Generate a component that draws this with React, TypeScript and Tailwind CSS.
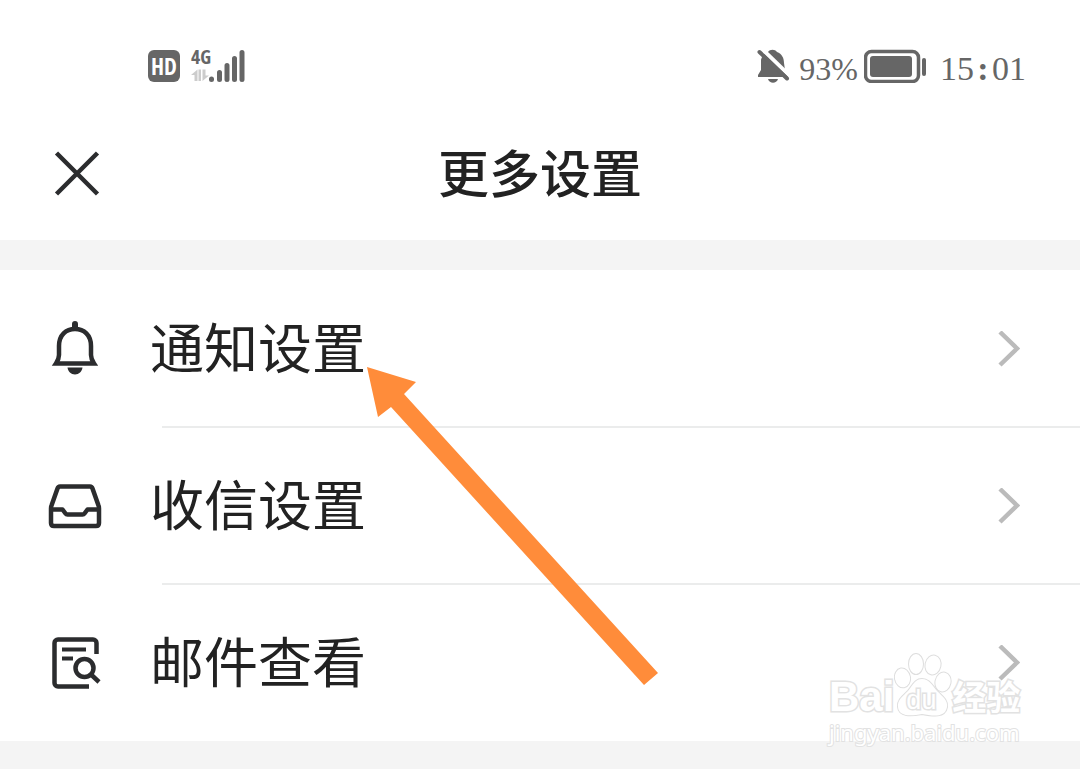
import type { ReactNode } from "react";

function StatusBar() {
  return (
    <div className="flex h-[108px] items-center justify-between pl-[148px] pr-[54px] pt-6 text-[#666]">
      <div className="flex items-center gap-[11px]">
        <div className="flex size-8 items-center justify-center rounded-md bg-[#666] font-['Liberation_Sans_Narrow','Open_Sans_Condensed',sans-serif] text-[23px] font-bold leading-7 text-white">
          HD
        </div>
        <div className="relative">
          <span className="absolute left-0 top-0 font-['Liberation_Sans_Narrow','Open_Sans_Condensed',sans-serif] text-xl font-bold leading-4">
            4G
          </span>
          <svg width="54" height="34" viewBox="0 0 54 34" aria-hidden="true">
            <path d="M6.500 20.500v11.500H3.500v-6H0zM7.500 20.500h2.500v11.500H7.500zM11.500 20.500h3v6H18L11.500 32z" fill="#ccc" />
            <g stroke="#666" strokeWidth="5" strokeLinecap="round">
              <path d="M20.500 30v.5M28.500 23.500v7M36 16.500v14M43.500 9.500v21M51 3.500v27" />
            </g>
          </svg>
        </div>
      </div>
      <div className="flex items-center font-['Liberation_Serif',serif] text-[32px] leading-8">
        <svg width="34" height="36" viewBox="0 0 34 36" aria-hidden="true">
          <path d="M11 4C13 1 18 1 20 4C25 6 27 10 27 15l1 7l3 7H1v-2l3-5V12c1-4 3-6 7-8z" fill="#666" />
          <path d="M11 31h10c-1.500 5-8.500 5-10 0z" fill="#666" />
          <path d="M3 -1L36 31" stroke="white" strokeWidth="4" />
          <path d="M2.500 4L30 30.500" stroke="#666" strokeWidth="4" strokeLinecap="round" />
        </svg>
        <span className="ml-2 pt-1.5">93%</span>
        <svg className="ml-1.5" width="64" height="34" viewBox="0 0 64 34" aria-hidden="true">
          <rect x="1.500" y="2.500" width="53" height="30" rx="6" fill="none" stroke="#666" strokeWidth="3.500" />
          <rect x="6" y="7" width="42" height="21" rx="3" fill="#666" />
          <rect x="58" y="9" width="4" height="18" rx="2" fill="#666" />
        </svg>
        <time className="ml-3 flex pt-1.5 text-[34px]">
          15<span className="w-[18px] text-center font-bold">:</span>01
        </time>
      </div>
    </div>
  );
}

function BellIcon() {
  return (
    <svg width="54" height="58" viewBox="0 0 54 58" fill="none" aria-hidden="true">
      <path d="M11 26C11 15 18 9 27 9s16 6 16 17v9c0 3 1 5.500 3 8.500H8c2-3 3-5.500 3-8.500z" stroke="#2b2c2e" strokeWidth="4.500" />
      <path d="M24 8V4a3 3 0 0 1 6 0v4zM19.500 47.500h15c-.5 4-3.500 7-7.500 7s-7-3-7.500-7z" fill="#2b2c2e" />
    </svg>
  );
}

function InboxIcon() {
  return (
    <svg width="54" height="46" viewBox="0 0 54 46" fill="none" stroke="#2b2c2e" strokeWidth="4.500" strokeLinejoin="round" aria-hidden="true">
      <path d="M12 3.500h30c1.500 0 2 .5 2.500 2l6 17c.5 1 .5 2 .5 3V40c0 2-1 3-3 3H6c-2 0-3-1-3-3V25.500c0-1 0-2 .5-3l6-17c.5-1.500 1-2 2.500-2z" />
      <path d="M3 26.500h11.500l3 4c.5.700 1 1 2 1h15c1 0 1.500-.3 2-1l3-4H51" />
    </svg>
  );
}

function MailSearchIcon() {
  return (
    <svg width="54" height="54" viewBox="0 0 54 54" fill="none" stroke="#2b2c2e" strokeWidth="4.500" aria-hidden="true">
      <path d="M48.500 18V7c0-2-1.500-3.500-3.500-3.500H10C8 3.500 6.500 5 6.500 7v40c0 2 1.500 3.500 3.500 3.500h31" />
      <path d="M14 13.500h24M14 22.500h11" strokeWidth="4" />
      <circle cx="36.500" cy="32" r="9" />
      <path d="M42.500 38l8.500 8" />
    </svg>
  );
}

function SettingRow({ icon, label, divider }: { icon: ReactNode; label: string; divider?: boolean }) {
  return (
    <li>
      <a href="#" className="relative flex h-[157px] items-center pl-12 pr-[60px]">
        <span className="flex w-[54px] justify-center">{icon}</span>
        <span className="ml-12 flex-1 pb-1.5 text-[54px] leading-[60px]">{label}</span>
        <svg width="22" height="36" viewBox="0 0 22 36" fill="none" aria-hidden="true">
          <path d="M2 1L19 17.500L2 34" stroke="#bbb" strokeWidth="4.500" />
        </svg>
        {divider && <span className="absolute -bottom-px left-[162px] right-0 h-0.5 bg-[#ebecec]" />}
      </a>
    </li>
  );
}

function Watermark() {
  return (
    <div className="absolute left-[829px] top-[652px] font-['Liberation_Sans','Noto_Sans_CJK_SC',sans-serif] text-white [-webkit-text-stroke:3px_#e2e2e2] [paint-order:stroke_fill]">
      <div className="flex h-[66px] items-end">
        <span className="text-[42px] font-bold leading-[42px]">Bai</span>
        <div className="relative h-[66px] w-[58px]">
          <svg width="58" height="66" viewBox="0 0 58 66" fill="white" stroke="#dedede" strokeWidth="2" aria-hidden="true">
            <ellipse cx="8.500" cy="26" rx="7.500" ry="9.500" transform="rotate(-10 8 26)" />
            <ellipse cx="22" cy="12" rx="7" ry="10" />
            <ellipse cx="39" cy="13" rx="7.500" ry="9.500" transform="rotate(12 39 13)" />
            <ellipse cx="49" cy="30" rx="7.500" ry="9.500" transform="rotate(12 49 30)" />
            <path d="M28 27c7 0 10 6 15 12c5 5 11 9 10 16c-2 11-14 9-25 7c-11 2-23 3-24-7c-1-7 5-11 10-16c5-6 7-12 14-12z" />
          </svg>
          <span className="absolute left-3 top-8 text-[27px] leading-8">du</span>
        </div>
        <span className="text-[34px] font-bold leading-[40px]">经验</span>
      </div>
      <div className="font-['Noto_Sans',sans-serif] text-[22px] leading-7 [-webkit-text-stroke:2px_#e2e2e2]">jingyan.baidu.com</div>
    </div>
  );
}

export default function App() {
  return (
    <div className="relative min-h-screen overflow-hidden bg-[#f4f4f4] font-['Noto_Sans_CJK_SC',sans-serif] text-[#222]">
      <div className="bg-white">
        <StatusBar />
        <header className="grid h-[132px] grid-cols-[1fr_auto_1fr] items-center px-[54px]">
          <button type="button" aria-label="关闭" className="w-fit">
            <svg width="46" height="46" viewBox="0 0 46 46" aria-hidden="true">
              <path d="M2.500 2L43.500 43M43.500 2L2.500 43" stroke="#2b2c2e" strokeWidth="4.500" />
            </svg>
          </button>
          <h1 className="pb-1.5 text-[51px] font-medium leading-[60px]">更多设置</h1>
        </header>
      </div>
      <ul className="mt-[30px] bg-white">
        <SettingRow icon={<BellIcon />} label="通知设置" divider />
        <SettingRow icon={<InboxIcon />} label="收信设置" divider />
        <SettingRow icon={<MailSearchIcon />} label="邮件查看" />
      </ul>
      <Watermark />
      <svg className="pointer-events-none absolute left-[366px] top-[366px]" width="294" height="320" viewBox="0 0 294 320" aria-hidden="true">
        <path d="M1 1L50 16L38 28L292 307L278 319L25 41L12 51Z" fill="#ff8c3a" />
      </svg>
    </div>
  );
}
